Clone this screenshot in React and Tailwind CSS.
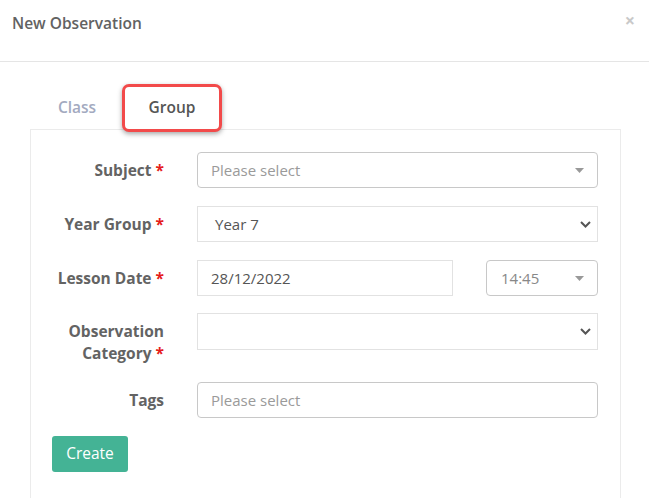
import React from "react";

const font = { fontFamily: '"Open Sans", "Noto Sans", sans-serif' };

function Caret() {
  return (
    <svg width="9" height="5" viewBox="0 0 9 5" className="shrink-0">
      <path d="M0 0 L9 0 L4.5 5 Z" fill="#999" />
    </svg>
  );
}

function Chevron() {
  return (
    <svg width="11" height="7" viewBox="0 0 11 7" className="shrink-0">
      <path d="M1 1 L5.5 5.5 L10 1" fill="none" stroke="#555" strokeWidth="2" />
    </svg>
  );
}

function Label({ children }) {
  return (
    <div className="w-[133px] shrink-0 pt-[7px] text-right text-[15.5px] leading-[22px] font-bold text-[#636363]">
      {children} <span className="text-[#e51c1c]">*</span>
    </div>
  );
}

export default function App() {
  return (
    <div className="w-[649px] h-[498px] bg-white overflow-hidden text-[#555]" style={font}>
      {/* Header */}
      <div className="h-[62px] border-b border-[#e5e5e5] flex items-start justify-between pl-3 pr-[14px] pt-[12px]">
        <div className="text-[15.5px] leading-[22px] font-semibold text-[#626262]">New Observation</div>
        <div className="text-[18px] leading-none text-[#c9c9c9] font-bold -mt-[1px]">×</div>
      </div>

      {/* Body */}
      <div className="pt-[22px] pl-[30px] pr-[28px]">
        {/* Tabs */}
        <div className="flex items-end h-[45px] relative">
          <div className="w-[92px] h-[45px] flex items-center justify-center text-[15.5px] font-semibold text-[#a3aabf] pt-[2px] pl-[2px]">
            Class
          </div>
          <div className="w-[100px] h-[48px] -mb-[3px] flex items-center justify-center text-[15.5px] font-semibold text-[#555] bg-white border-[3px] border-[#f24a4a] rounded-[7px] shadow-[0_2px_5px_rgba(0,0,0,0.35)] relative z-10">
            Group
          </div>
        </div>

        {/* Panel */}
        <div className="border border-[#ebebeb] h-[400px] pt-[22px] pr-[22px]">
          <div className="flex flex-col">
            {/* Subject */}
            <div className="flex items-start gap-[33px]">
              <Label>Subject</Label>
              <div className="flex-1 h-[36px] border border-[#c8c8c8] rounded-[4px] flex items-center justify-between pl-[13px] pr-[13px]">
                <span className="text-[15px] text-[#9a9a9a]">Please select</span>
                <Caret />
              </div>
            </div>

            {/* Year Group */}
            <div className="flex items-start gap-[33px] mt-[18px]">
              <Label>Year Group</Label>
              <div className="flex-1 h-[36px] border border-[#e2e2e2] flex items-center justify-between pl-[17px] pr-[6px]">
                <span className="text-[15px] text-[#555]">Year 7</span>
                <Chevron />
              </div>
            </div>

            {/* Lesson Date */}
            <div className="flex items-start gap-[33px] mt-[18px]">
              <Label>Lesson Date</Label>
              <div className="flex-1 flex items-center justify-between">
                <div className="w-[256px] h-[36px] border border-[#e2e2e2] flex items-center pl-[13px]">
                  <span className="text-[15px] text-[#555]">28/12/2022</span>
                </div>
                <div className="w-[112px] h-[36px] border border-[#c8c8c8] rounded-[4px] flex items-center justify-between pl-[14px] pr-[13px]">
                  <span className="text-[15px] text-[#888]">14:45</span>
                  <Caret />
                </div>
              </div>
            </div>

            {/* Observation Category */}
            <div className="flex items-start gap-[33px] mt-[17px]">
              <div className="w-[133px] shrink-0 pt-[7px] text-right text-[15.5px] leading-[22px] font-bold text-[#636363]">
                Observation
                <br />
                Category <span className="text-[#e51c1c]">*</span>
              </div>
              <div className="flex-1 h-[37px] border border-[#e2e2e2] flex items-center justify-end pr-[6px]">
                <Chevron />
              </div>
            </div>

            {/* Tags */}
            <div className="flex items-start gap-[33px] mt-[18px]">
              <div className="w-[133px] shrink-0 pt-[7px] text-right text-[15.5px] leading-[22px] font-bold text-[#636363]">
                Tags
              </div>
              <div className="flex-1 h-[36px] border border-[#c8c8c8] rounded-[4px] flex items-center pl-[13px]">
                <span className="text-[15px] text-[#9a9a9a]">Please select</span>
              </div>
            </div>

            {/* Create */}
            <div className="pl-[21px] mt-[18px]">
              <button className="w-[76px] h-[36px] rounded-[3px] bg-[#44b395] text-white text-[15.5px]">
                Create
              </button>
            </div>
          </div>
        </div>
      </div>
    </div>
  );
}
